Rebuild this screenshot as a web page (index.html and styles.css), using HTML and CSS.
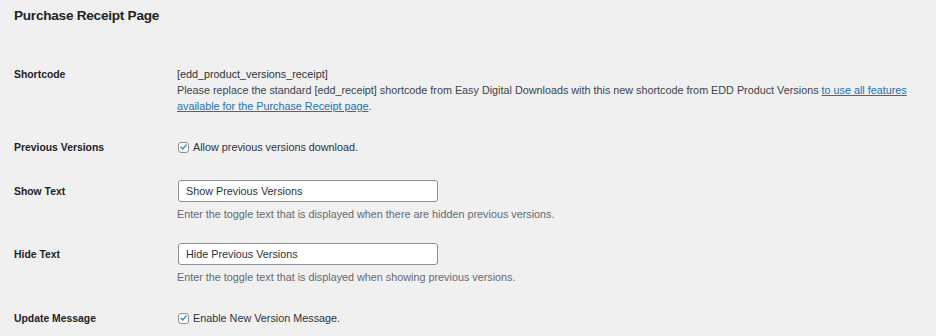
FILE: index.html
```html
<!DOCTYPE html>
<html>
<head>
<meta charset="utf-8">
<link rel="stylesheet" href="styles.css">
</head>
<body>
<div class="wrap">
  <h2 class="title">Purchase Receipt Page</h2>
  <div class="form-table">
    <div class="row">
      <div class="th">Shortcode</div>
      <div class="td">
        <div class="code">[edd_product_versions_receipt]</div>
        <p class="desc">Please replace the standard [edd_receipt] shortcode from Easy Digital Downloads with this new shortcode from EDD Product Versions <a href="#">to use all features</a><br><a href="#">available for the Purchase Receipt page</a>.</p>
      </div>
    </div>
    <div class="row">
      <div class="th">Previous Versions</div>
      <div class="td">
        <label class="check"><span class="box"><svg viewBox="0 0 12 12" width="12" height="12"><path d="M2.6 6.2 L5 8.6 L9.6 3.2" fill="none" stroke="#3582c4" stroke-width="1.8" stroke-linecap="round" stroke-linejoin="round"/></svg></span>Allow previous versions download.</label>
      </div>
    </div>
    <div class="row">
      <div class="th th-input">Show Text</div>
      <div class="td">
        <div class="input">Show Previous Versions</div>
        <p class="desc muted">Enter the toggle text that is displayed when there are hidden previous versions.</p>
      </div>
    </div>
    <div class="row row-tight">
      <div class="th th-input">Hide Text</div>
      <div class="td">
        <div class="input">Hide Previous Versions</div>
        <p class="desc muted">Enter the toggle text that is displayed when showing previous versions.</p>
      </div>
    </div>
    <div class="row">
      <div class="th">Update Message</div>
      <div class="td">
        <label class="check"><span class="box"><svg viewBox="0 0 12 12" width="12" height="12"><path d="M2.6 6.2 L5 8.6 L9.6 3.2" fill="none" stroke="#3582c4" stroke-width="1.8" stroke-linecap="round" stroke-linejoin="round"/></svg></span>Enable New Version Message.</label>
      </div>
    </div>
  </div>
</div>
</body>
</html>
```

FILE: styles.css
```css
html, body {
  margin: 0;
  padding: 0;
  background: #f0f0f1;
}
body {
  font-family: "Liberation Sans", Arial, sans-serif;
  font-size: 10.8px;
  line-height: 16px;
  color: #1d2327;
}
.wrap {
  padding: 0 10px 0 14px;
}
.title {
  margin: 0;
  padding-top: 7px;
  font-size: 13.6px;
  letter-spacing: -0.25px;
  line-height: 18px;
  font-weight: 700;
  color: #1d2327;
}
.form-table {
  display: flex;
  flex-direction: column;
  gap: 25px;
  padding-top: 41px;
}
.row {
  display: flex;
  align-items: flex-start;
}
.row-tight {
  margin-top: -4px;
}
.th {
  width: 163px;
  flex: none;
  font-weight: 700;
  font-size: 10.4px;
  color: #1d2327;
  padding-top: 1px;
  margin-bottom: -1px;
}
.th-input {
  padding-top: 4px;
}
.td {
  flex: 1;
}
.code {
  color: #2c3338;
}
.desc {
  margin: 0;
  color: #3c434a;
}
.desc.muted {
  color: #646970;
  margin-top: 4px;
}
.desc a {
  color: #2271b1;
  text-decoration: underline;
}
.check {
  display: flex;
  align-items: center;
  gap: 4px;
  color: #2c3338;
}
.box {
  width: 11px;
  height: 11px;
  box-sizing: border-box;
  border: 1px solid #8c8f94;
  border-radius: 3px;
  background: #fff;
  display: flex;
  align-items: center;
  justify-content: center;
  margin-left: 1px;
}
.box svg {
  width: 10px;
  height: 10px;
}
.input {
  width: 260px;
  height: 22px;
  box-sizing: border-box;
  border: 1px solid #8c8f94;
  border-radius: 3px;
  background: #fff;
  padding: 0 7px;
  line-height: 20px;
  color: #2c3338;
  margin-left: 1px;
}
```
